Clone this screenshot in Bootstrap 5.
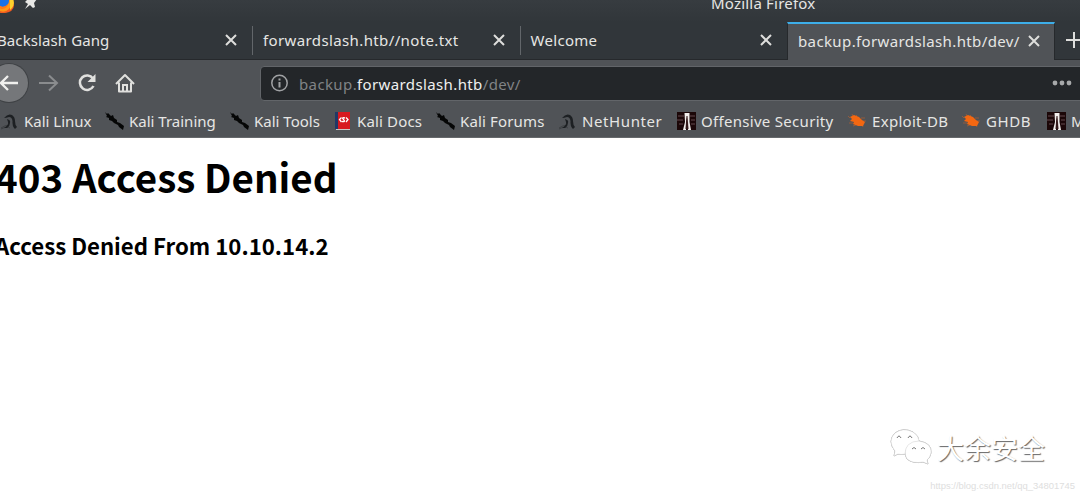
<!DOCTYPE html>
<html lang="en">
<head>
<meta charset="utf-8">
<title>Mozilla Firefox</title>
<link href="https://cdn.jsdelivr.net/npm/bootstrap@5.3.0/dist/css/bootstrap.min.css" rel="stylesheet">
<style>
body{font-family:"Noto Sans",sans-serif;font-size:15px;line-height:20px;color:#000;height:497px}
.chrome{color:#e6e6e4;background:#505357}
.titlebar{height:22px;background:linear-gradient(#373c40,#31363a)}
.titlebar .caption{margin-left:711px;margin-top:-7px;letter-spacing:.2px}
.apps{left:0;top:0}
.tabstrip{height:38px;background:#31363a;border-bottom:1px solid #26292c}
.tab{width:267.5px;padding:0 15px 1px 11px;flex:none}
.tab:first-child{width:252px;padding-left:0}
.tab:first-child .label{margin-left:-3px;letter-spacing:.1px}
.tab.split::after{content:"";position:absolute;right:-1px;top:4px;height:29px;width:1px;background:#62666a}
.tab.on{width:268px;background:#505357;border-top:2px solid #3daee9;border-left:1px solid #26292c;border-right:1px solid #26292c;height:38px;padding:0 14px 3px 10px}
.wide{letter-spacing:.38px}
.tools{height:46px}
.back{width:38px;height:38px;margin-left:-10px;background:#75777a;box-shadow:0 0 0 1px #3f4245}
.fwd{margin-left:11px}.reload{margin-left:18px}.home{margin-left:18px}
.url{width:840px;height:35px;margin-left:125px;background:#232629;border:1px solid #626569;border-radius:4px;color:#808386}
.url .address{letter-spacing:.38px;padding-top:2px;width:224px;margin-left:10px}
.url b{font-weight:400;color:#eff0ef}
.dots{margin-left:529px}
.marks{display:grid;grid-template-columns:105px 125px 103px 103px 122px 119px 171px 114px 85px 80px;height:32px;padding:0 0 2px 1px;border-bottom:1px solid #66696c;overflow:hidden}
.marks svg{width:20px;height:20px;margin-right:3px;margin-left:-1px;flex:none}
.marks span{margin-left:1px}
.s1{letter-spacing:.15px}.s2{letter-spacing:.3px}.s3{letter-spacing:.6px}
.page{font-family:"Noto Sans CJK SC",sans-serif}
.page h1{font-size:38.5px;line-height:60px;margin:8px 0 0 -5px;font-weight:700}
.page h2{font-size:22.2px;line-height:36px;margin:21px 0 0 -5px;font-weight:700}
.brand{right:35px;bottom:29px;font-size:27px;line-height:40px;color:#fff;text-shadow:1px 1px 1px #666}
.brand svg{filter:drop-shadow(.5px .8px .4px #777)}
.source{right:5px;bottom:2px;font:9.45px/18px "Liberation Sans",sans-serif;color:#dedede}
</style>
</head>
<body class="bg-white overflow-hidden position-relative">
<svg class="d-none">
<symbol id="x" viewBox="0 0 12 12"><path d="M1 1l10 10M11 1L1 11" stroke="#dededc" stroke-width="2" fill="none"/></symbol>
<symbol id="dragon" viewBox="0 0 20 20"><path d="M1 17Q5 14 9 14.500M1 18Q7 15 10 17" stroke="#3c3f42" stroke-width="1" fill="none"/><path d="M4 7Q8 2 12 4Q15 6 15 10Q15 14 17 16L15 18Q12 15 12.500 10Q12 6 9 6Q6 7 4 7ZM7 8Q11 9 10 12Q10 15 7 17L4 17Q9 14 8 11Z" fill="#1d2023"/></symbol>
<symbol id="knife" viewBox="0 0 20 20"><path d="M0 1L2 3L3 2L6 5L8 4L9 7L12 9L12 11L15 12L19 15L18 19L14 16L13 14L9 12L7 10L4 9L4 7L1 6L2 5Z" fill="#050606"/></symbol>
<symbol id="docs" viewBox="0 0 20 20"><path fill="#203866" d="M2 1h3v17H2z"/><path fill="#d8191f" d="M5 1h12v17H5z"/><path fill="#c9c6c4" d="M3 18h14v1H3z"/><path d="M8.500 6.500L6.500 8.500L8.500 11M13 6.500l2 2L13 11M12 7Q8 6 10.500 8.500Q13 11 9 10.500" stroke="#fff" stroke-width="1.300" fill="none"/></symbol>
<symbol id="offsec" viewBox="0 0 20 20"><path fill="#1b0708" d="M0 1h19v18H0z"/><path d="M1 5h6m6 0h5M0 9h6m8 0h4M2 13h4m8 0h4" stroke="#4c3537" stroke-width="1.500"/><path d="M7.500 2h5v9l1.500 8h-3L9.500 6L9 19H6l2-8z" fill="#f1eeec"/><path d="M9.500 5h1l1 13h-3z" fill="#34191a"/></symbol>
<symbol id="bug" viewBox="0 0 20 20"><path d="M2 7L0 5M5 5L4 3M9 5L8 4M13 7l4 0M15 10h3M14 14l1 2M8 14l-3 1M5 12l-4 0" stroke="#a45e35" stroke-width=".8"/><path d="M2 6L6 4L11 6L14 9L17 11L15 15L10 15L5 13L6 11L2 10L4 8Z" fill="#f36711"/></symbol>
</svg>
<header class="chrome overflow-hidden">
 <div class="titlebar position-relative">
  <svg class="apps position-absolute" width="40" height="14"><circle cx="3.500" cy="3" r="10" fill="#ff9816"/><path d="M-4 9Q8 17 13 1Q17 12 4 13Q-2 13-4 9" fill="#f35a20"/><path d="M10 0L13.500 0Q15 6 10 10Z" fill="#ffd32e"/><circle cx="3" cy="1" r="6" fill="#1771e8"/><path d="M-1 5Q3 9 8 4Q6 11-1 8Z" fill="#ff7818"/><path d="M30-1L37-1L34 3L35 7L33 8L30 5L25 9L28 4L25 2L27 0Z" fill="#e8e8e6"/></svg>
  <div class="d-flex"><span class="caption">Mozilla Firefox</span></div>
 </div>
 <nav class="tabstrip d-flex" aria-label="Tabs">
  <div class="tab split position-relative d-flex align-items-center justify-content-between"><span class="label">Backslash Gang</span><svg width="12" height="12"><use href="#x"/></svg></div>
  <div class="tab split position-relative d-flex align-items-center justify-content-between"><span class="label wide">forwardslash.htb//note.txt</span><svg width="12" height="12"><use href="#x"/></svg></div>
  <div class="tab position-relative d-flex align-items-center justify-content-between"><span class="label s2">Welcome</span><svg width="12" height="12"><use href="#x"/></svg></div>
  <div class="tab on d-flex align-items-center justify-content-between"><span class="label wide">backup.forwardslash.htb/dev/</span><svg width="12" height="12"><use href="#x"/></svg></div>
  <svg class="flex-shrink-0 align-self-center ms-2" width="20" height="18"><path d="M3 8h16M11 0v16" stroke="#dededc" stroke-width="2"/></svg>
 </nav>
 <div class="tools d-flex align-items-center">
  <span class="back rounded-circle flex-shrink-0 d-flex align-items-center justify-content-end pe-2"><svg width="20" height="18"><path d="M18 9H1M8 2L1 9l7 7" stroke="#f0f0ee" stroke-width="2.300" fill="none"/></svg></span>
  <svg class="fwd flex-shrink-0" width="20" height="18"><path d="M0 9h18M10 1.500l8 7.500-8 7.500" stroke="#8a8c8e" stroke-width="2" fill="none"/></svg>
  <svg class="reload flex-shrink-0" width="20" height="20"><path d="M16 5.500A7.200 7.200 0 1 0 16.500 13" stroke="#e0e0de" stroke-width="2.500" fill="none"/><path d="M18.500 1v8h-8z" fill="#e0e0de"/></svg>
  <svg class="home flex-shrink-0" width="20" height="20"><path d="M1 11L10 2l9 9M4 9.500V18.500h12V9.500" stroke="#e0e0de" stroke-width="2" fill="none" stroke-linejoin="round"/><path d="M8 18v-6h4v6" stroke="#e0e0de" stroke-width="2" fill="none"/></svg>
  <div class="url flex-shrink-0 d-flex align-items-center">
   <svg class="ms-2 flex-shrink-0" width="20" height="20"><circle cx="10.500" cy="10" r="7.700" stroke="#a0a2a4" stroke-width="1.500" fill="none"/><path d="M10.500 5.500v2M10.500 9v5.500" stroke="#a0a2a4" stroke-width="2"/></svg>
   <span class="address flex-shrink-0">backup.<b>forwardslash.htb</b>/dev/</span>
   <svg class="dots flex-shrink-0" width="20" height="8"><g fill="#a7a9aa"><circle cx="3" cy="4" r="2.400"/><circle cx="10" cy="4" r="2.400"/><circle cx="17" cy="4" r="2.400"/></g></svg>
  </div>
 </div>
 <nav class="marks text-nowrap" aria-label="Bookmarks">
  <div class="d-flex align-items-center"><svg><use href="#dragon"/></svg><span>Kali Linux</span></div>
  <div class="d-flex align-items-center"><svg><use href="#knife"/></svg><span>Kali Training</span></div>
  <div class="d-flex align-items-center"><svg><use href="#knife"/></svg><span>Kali Tools</span></div>
  <div class="d-flex align-items-center"><svg><use href="#docs"/></svg><span class="s1">Kali Docs</span></div>
  <div class="d-flex align-items-center"><svg><use href="#knife"/></svg><span class="s1">Kali Forums</span></div>
  <div class="d-flex align-items-center"><svg><use href="#dragon"/></svg><span class="s3">NetHunter</span></div>
  <div class="d-flex align-items-center"><svg><use href="#offsec"/></svg><span class="s2">Offensive Security</span></div>
  <div class="d-flex align-items-center"><svg><use href="#bug"/></svg><span class="s2">Exploit-DB</span></div>
  <div class="d-flex align-items-center"><svg><use href="#bug"/></svg><span class="s3">GHDB</span></div>
  <div class="d-flex align-items-center"><svg><use href="#offsec"/></svg><span>M</span></div>
 </nav>
</header>
<main class="page">
 <h1>403 Access Denied</h1>
 <h2>Access Denied From 10.10.14.2</h2>
</main>
<div class="brand page position-absolute d-flex align-items-center">
 <svg class="me-1" width="44" height="38" fill="#fff" stroke="#ddd" stroke-width=".6"><path d="M5 27l1-5Q-2 12 6 4Q14-2 24 3Q30 7 30 12Q17 13 16 25Q12 26 9 25Z"/><path d="M30 12Q43 14 42 24Q41 29 38 31l1 4-5-2Q24 35 18 30Q14 23 19 16Q23 12 30 12Z"/><path d="M8 9q2-4 4 0M19 9q2-4 4 0M23 20q2-3 4 0M32 20q2-3 4 0" fill="none" stroke="#777" stroke-width="1"/></svg>
 <span>大余安全</span>
</div>
<div class="source position-absolute">https://blog.csdn.net/qq_34801745</div>
<script src="https://cdn.jsdelivr.net/npm/bootstrap@5.3.0/dist/js/bootstrap.bundle.min.js"></script>
</body>
</html>
